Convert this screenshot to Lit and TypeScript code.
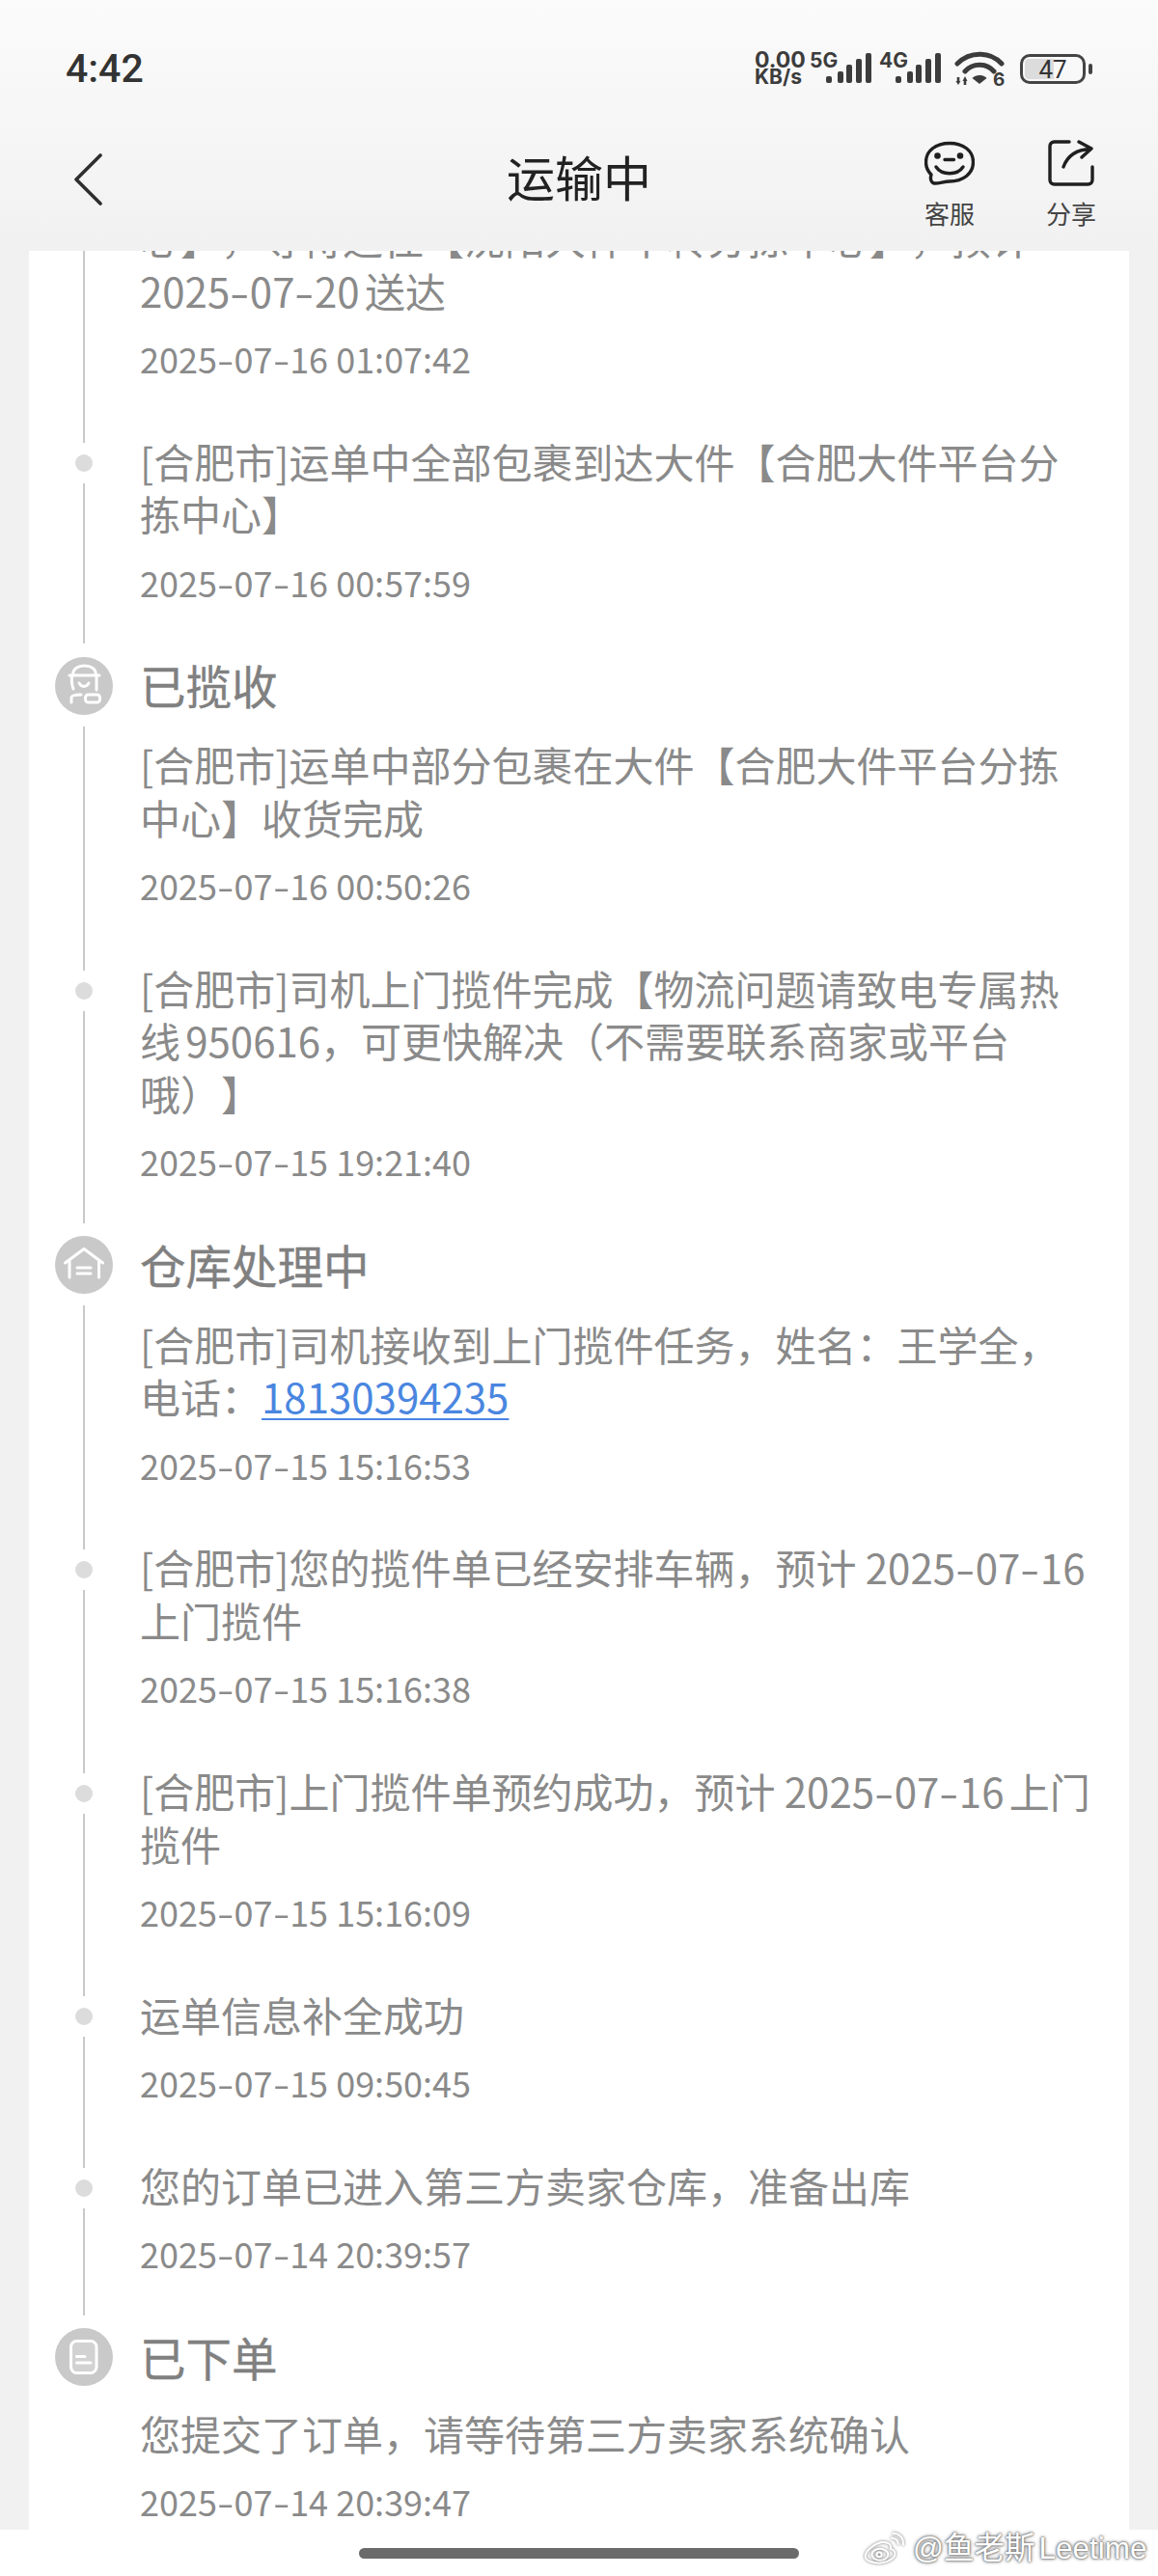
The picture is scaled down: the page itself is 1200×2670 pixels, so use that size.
// app.ts
// Parcel tracking timeline screen

import { LitElement, html, css, svg, TemplateResult } from "lit";
import { customElement } from "lit/decorators.js";

type Row = {
  kind: "row";
  lines: (string | TemplateResult)[];
  time: string;
  dot?: boolean;
  noLine?: boolean;
};
type Head = { kind: "head"; title: string; icon: TemplateResult; noLine?: boolean };

const courierIcon = svg`
  <path d="M15 19H46M18.500 18C19 12 24 9 30.500 9S42 12 42.500 18M17.500 19C17 24 17 28 19 33M43 19V34M25 27C27 31.500 33 31.500 35 27M17 47V42C17 40 19 39 27 39" />
  <rect x="31.500" y="39" width="15" height="8" rx="3" />
`;
const houseIcon = svg`
  <path d="M10.500 28L30 13.500L49.500 28M15 25V43M45.500 25V43M23 33H37M23 39H37" />
`;
const docIcon = svg`
  <rect x="16.500" y="13.500" width="26.500" height="33" rx="6" fill="rgba(255,255,255,.18)" />
  <path d="M22.500 29.500H31M22.500 36H37" />
`;

const items: (Row | Head)[] = [
  {
    kind: "row",
    lines: ["心】，等待运往【沈阳大件中转分拣中心】，预计", "2025-07-20送达"],
    time: "2025-07-16 01:07:42",
  },
  {
    kind: "row",
    dot: true,
    lines: ["[合肥市]运单中全部包裹到达大件【合肥大件平台分", "拣中心】"],
    time: "2025-07-16 00:57:59",
  },
  { kind: "head", title: "已揽收", icon: courierIcon },
  {
    kind: "row",
    lines: ["[合肥市]运单中部分包裹在大件【合肥大件平台分拣", "中心】收货完成"],
    time: "2025-07-16 00:50:26",
  },
  {
    kind: "row",
    dot: true,
    lines: [
      "[合肥市]司机上门揽件完成【物流问题请致电专属热",
      "线950616，可更快解决（不需要联系商家或平台",
      "哦）】",
    ],
    time: "2025-07-15 19:21:40",
  },
  { kind: "head", title: "仓库处理中", icon: houseIcon },
  {
    kind: "row",
    lines: [
      "[合肥市]司机接收到上门揽件任务，姓名：王学全，",
      html`电话：<a class="phone">18130394235</a>`,
    ],
    time: "2025-07-15 15:16:53",
  },
  {
    kind: "row",
    dot: true,
    lines: ["[合肥市]您的揽件单已经安排车辆，预计 2025-07-16", "上门揽件"],
    time: "2025-07-15 15:16:38",
  },
  {
    kind: "row",
    dot: true,
    lines: ["[合肥市]上门揽件单预约成功，预计 2025-07-16上门", "揽件"],
    time: "2025-07-15 15:16:09",
  },
  { kind: "row", dot: true, lines: ["运单信息补全成功"], time: "2025-07-15 09:50:45" },
  {
    kind: "row",
    dot: true,
    lines: ["您的订单已进入第三方卖家仓库，准备出库"],
    time: "2025-07-14 20:39:57",
  },
  { kind: "head", title: "已下单", icon: docIcon, noLine: true },
  {
    kind: "row",
    noLine: true,
    lines: ["您提交了订单，请等待第三方卖家系统确认"],
    time: "2025-07-14 20:39:47",
  },
];

// the hyphen in the screenshot's system font is wider than any installed one
function dashed(text: string | TemplateResult) {
  if (typeof text !== "string") return text;
  const parts = text.split("-");
  return parts.map((p, i) =>
    i === 0 ? p : html`<span class="dash">-</span>${p}`
  );
}

function signal(label: string) {
  const bars = [
    [0, 24, 7],
    [12, 19, 12],
    [21, 12, 19],
    [31, 6, 25],
    [41, 0, 31],
  ];
  return html`
    <svg class="signal" viewBox="0 0 65 36" width="65" height="36">
      <text x="0" y="17" class="signal-label">${label}</text>
      ${bars.map(
        ([x, y, h]) =>
          svg`<rect x=${x + 17} y=${y + 2} width="6" height=${h} rx="2" fill="#3c3c3c" />`
      )}
    </svg>
  `;
}

@customElement("app-root")
export class AppRoot extends LitElement {
  static styles = css`
    :host {
      display: block;
      width: 1200px;
      height: 2670px;
      position: relative;
      overflow: hidden;
      background: #fff;
      font-family: "Noto Sans CJK SC", "Noto Sans", sans-serif;
      text-spacing-trim: space-all;
      text-autospace: normal;
    }

    .top {
      height: 260px;
      background: linear-gradient(180deg, #fbfbfb 0%, #f1f1f1 100%);
    }

    .status {
      height: 110px;
      padding: 32px 68px 0 68px;
      box-sizing: border-box;
      display: flex;
      align-items: center;
      justify-content: space-between;
    }

    .clock {
      font-family: Roboto, sans-serif;
      font-size: 41px;
      font-weight: 500;
      color: #333;
    }

    .indicators {
      display: flex;
      align-items: center;
    }

    .net {
      width: 52px;
      font-family: Inter, sans-serif;
      font-weight: 700;
      color: #3c3c3c;
      margin-right: 5px;
    }

    .net div {
      font-size: 23px;
      line-height: 18px;
      white-space: nowrap;
    }

    .net div + div {
      font-size: 21px;
    }

    .signal {
      display: block;
      margin-right: 7px;
    }

    .signal-label {
      font-family: Inter, sans-serif;
      font-size: 21px;
      font-weight: 700;
      fill: #3c3c3c;
    }

    .wifi {
      display: block;
      margin: 0 16px 0 6px;
    }

    .battery {
      width: 68px;
      height: 31px;
      box-sizing: border-box;
      border: 3.5px solid #444;
      border-radius: 10px;
      padding: 2px;
    }

    .battery-inner {
      height: 100%;
      border-radius: 4px;
      background: linear-gradient(90deg, #dcdcdc 52%, transparent 52%);
      font-family: Roboto, sans-serif;
      font-size: 26px;
      line-height: 23px;
      color: #333;
      text-align: center;
    }

    .nub {
      width: 4px;
      height: 11px;
      margin-left: 3px;
      border-radius: 2px;
      background: #444;
    }

    .nav {
      height: 150px;
      padding: 0 64px;
      display: grid;
      grid-template-columns: 1fr auto 1fr;
      align-items: center;
    }

    .back {
      display: block;
      margin-left: 12px;
      margin-top: 2px;
    }

    .nav-title {
      font-size: 50px;
      color: #222;
      margin-top: -7px;
    }

    .actions {
      display: flex;
      justify-content: flex-end;
      gap: 74px;
      margin-top: 12px;
    }

    .action {
      width: 52px;
      display: flex;
      flex-direction: column;
      align-items: center;
      font-size: 26px;
      line-height: 32px;
      color: #444;
      white-space: nowrap;
    }

    .action svg {
      display: block;
      height: 48px;
      margin-bottom: 12px;
    }

    .body {
      height: 2362px;
      padding: 0 30px;
      background: #f1f1f1;
    }

    .card {
      height: 100%;
      background: #fff;
      overflow: hidden;
    }

    .list {
      margin-top: -41px;
    }

    .row {
      display: grid;
      grid-template-columns: 115px 1fr;
    }

    .axis {
      display: flex;
      flex-direction: column;
      align-items: center;
      padding-right: 1px;
    }

    .line {
      flex: 1;
      width: 2px;
      background: #c9c9c9;
    }

    .row:has(+ .head) .line:last-child {
      margin-bottom: 15px;
    }

    .line.stub {
      flex: none;
      height: 8.8px;
    }

    .dot {
      flex: none;
      width: 18px;
      height: 18px;
      margin: 12px 0;
      border-radius: 50%;
      background: #dcdcdc;
    }

    .circle {
      flex: none;
      width: 60px;
      height: 60px;
      margin-top: -1.5px;
      margin-bottom: 12px;
      border-radius: 50%;
      background: #c9c9c9;
    }

    .circle svg {
      display: block;
      fill: none;
      stroke: #fff;
      stroke-width: 3;
      stroke-linecap: round;
      stroke-linejoin: round;
    }

    .head-title {
      height: 56px;
      margin-bottom: 26.7px;
      font-size: 47.5px;
      line-height: 56px;
      color: #808080;
      -webkit-text-stroke: 0.4px #808080;
    }

    .head.last .head-title {
      margin-bottom: 24px;
    }

    .content {
      padding-bottom: 57.8px;
    }

    .desc {
      font-size: 42px;
      line-height: 54.6px;
      color: #8a8a8a;
      white-space: nowrap;
    }

    .time {
      margin-top: 20.7px;
      font-size: 36px;
      line-height: 44px;
      color: #8a8a8a;
      white-space: nowrap;
    }

    .dash {
      display: inline-block;
      width: 0.49em;
      text-align: center;
      transform: scaleX(1.4);
    }

    .phone {
      color: #4a86e0;
      text-decoration: underline;
      text-underline-offset: 5px;
      text-decoration-thickness: 2px;
    }

    .bottom {
      height: 48px;
      padding-top: 19px;
      box-sizing: border-box;
      display: flex;
      justify-content: center;
    }

    .home-bar {
      width: 456px;
      height: 11px;
      border-radius: 6px;
      background: #6b6b6b;
    }

    .watermark {
      position: absolute;
      left: 895px;
      top: 2620px;
      display: flex;
      align-items: center;
      gap: 7px;
      font-family: "Liberation Sans", "Noto Sans CJK SC", sans-serif;
      font-size: 31.5px;
      line-height: 42px;
      color: #fff;
      text-shadow: 0 0 2px #666, 0 0 3px #777, 0 0 4px #999;
      white-space: nowrap;
    }

    .watermark svg {
      display: block;
      fill: none;
      stroke: #fff;
      filter: drop-shadow(0 0 1.5px #666);
    }
  `;

  private renderHead(item: Head) {
    return html`
      <div class="row head ${item.noLine ? "last" : ""}">
        <div class="axis">
          <div class="circle">
            <svg viewBox="0 0 60 60" width="60" height="60">${item.icon}</svg>
          </div>
          ${item.noLine ? "" : html`<div class="line"></div>`}
        </div>
        <div class="head-title">${item.title}</div>
      </div>
    `;
  }

  private renderRow(item: Row) {
    return html`
      <div class="row">
        <div class="axis">
          ${item.dot
            ? html`<div class="line stub"></div>
                <div class="dot"></div>`
            : ""}
          ${item.noLine ? "" : html`<div class="line"></div>`}
        </div>
        <div class="content">
          ${item.lines.map((l) => html`<div class="desc">${dashed(l)}</div>`)}
          <div class="time">${dashed(item.time)}</div>
        </div>
      </div>
    `;
  }

  protected render() {
    return html`
      <div class="top">
        <div class="status">
          <div class="clock">4:42</div>
          <div class="indicators">
            <div class="net">
              <div>0.00</div>
              <div>KB/s</div>
            </div>
            ${signal("5G")} ${signal("4G")}
            <svg class="wifi" viewBox="0 0 52 38" width="52" height="38">
              <g fill="none" stroke="#3c3c3c" stroke-width="5" stroke-linecap="round">
                <path d="M3 14C16 1 37 1 49 14" />
                <path d="M11 22C19 13 33 13 41 22" />
              </g>
              <path d="M18.500 29C22 25 30 25 33.500 29L26 35Z" fill="#3c3c3c" />
              <path d="M4 28V33M11 31V36" fill="none" stroke="#3c3c3c" stroke-width="2.600" />
              <path d="M1.500 32H6.500L4 36ZM8.500 32H13.500L11 27Z" fill="#3c3c3c" />
              <text x="40" y="37" font-family="Inter, sans-serif" font-size="19" font-weight="700" fill="#3c3c3c">6</text>
            </svg>
            <div class="battery"><div class="battery-inner">47</div></div>
            <div class="nub"></div>
          </div>
        </div>
        <div class="nav">
          <svg class="back" viewBox="0 0 30 54" width="30" height="54">
            <path d="M28 2L3 27L28 52" fill="none" stroke="#2e2e2e" stroke-width="3.600" stroke-linecap="round" stroke-linejoin="round" />
          </svg>
          <div class="nav-title">运输中</div>
          <div class="actions">
            <div class="action">
              <svg viewBox="0 0 52 44" width="52" fill="none" stroke="#1f1f1f" stroke-width="3.400" stroke-linecap="round" stroke-linejoin="round">
                <path d="M10 43C6 42 6 37 7 34C3 30 1.500 26 1.500 21C1.500 9 12 1.500 26 1.500S50.500 9 50.500 21S40 41 26 41C20 41 15 43.500 10 43Z" />
                <path d="M12 26C18 35 34 35 40 26M21 18.500H30.500" />
                <circle cx="13.500" cy="14.500" r="1.600" fill="#1f1f1f" />
                <circle cx="37" cy="14.500" r="1.600" fill="#1f1f1f" />
              </svg>
              客服
            </div>
            <div class="action">
              <svg viewBox="0 0 48 48" width="48" fill="none" stroke="#1f1f1f" stroke-width="3.400" stroke-linecap="round" stroke-linejoin="round">
                <path d="M22 2H6.500A4.500 4.500 0 0 0 2 6.500V41.500A4.500 4.500 0 0 0 6.500 46H41.500A4.500 4.500 0 0 0 46 41.500V28" />
                <path d="M16 28C20 17 28 10 44 9.500M32 2L45 9L35 18" />
              </svg>
              分享
            </div>
          </div>
        </div>
      </div>
      <div class="body">
        <div class="card">
          <div class="list">
            ${items.map((it) =>
              it.kind === "head" ? this.renderHead(it) : this.renderRow(it)
            )}
          </div>
        </div>
      </div>
      <div class="bottom"><div class="home-bar"></div></div>
      <div class="watermark">
        <svg viewBox="0 0 52 40" width="44" height="34" stroke-width="2.400">
          <path d="M22 13C12 15 2 24 2 30C2 36 12 39 22 38C32 37 40 31 38 25C37 22 34 21.500 33 21C34 17 32 12 22 13Z" />
          <ellipse cx="20" cy="28" rx="10" ry="7" />
          <circle cx="19" cy="28" r="3" />
          <path d="M33 8C38 7 43 11 42 16M35 2C43 1 50 8 48 17" />
        </svg>
        <span>@鱼老斯Leetime</span>
      </div>
    `;
  }
}

declare global {
  interface HTMLElementTagNameMap {
    "app-root": AppRoot;
  }
}
